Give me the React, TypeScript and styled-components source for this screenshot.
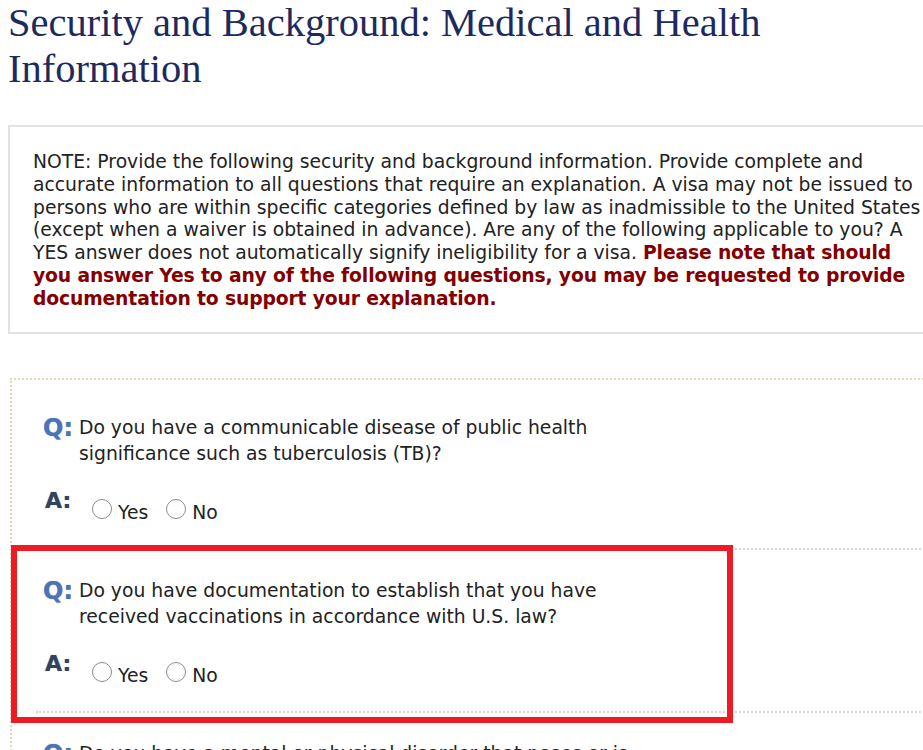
import styled, { createGlobalStyle } from 'styled-components';

const GlobalStyle = createGlobalStyle`
  html, body {
    margin: 0;
    padding: 0;
    background: #fff;
    overflow: hidden;
  }
  body {
    font-family: "DejaVu Sans", Verdana, sans-serif;
    color: #222;
  }
`;

const Page = styled.div`
  padding: 0 8px;
  width: 1000px;
`;

const Title = styled.h1`
  margin: 0;
  font-family: "Liberation Serif", "Times New Roman", serif;
  font-weight: normal;
  font-size: 40.5px;
  line-height: 46px;
  color: #1d2a5d;
  width: 900px;
`;

const NoteBox = styled.div`
  margin-top: 33px;
  width: 888px;
  padding: 24px 23px 22px 23px;
  border: 2px solid #e2e2e2;
  font-size: 18.75px;
  line-height: 22.75px;
  color: #222;
`;

const Warning = styled.strong`
  color: #840000;
  font-weight: bold;
  letter-spacing: -0.15px;
`;

const QuestionList = styled.div`
  margin-top: 44px;
  margin-left: 2px;
  padding: 7px 0 0 24px;
  border-top: 2px dotted #e5d8bd;
  border-left: 2px dotted #e5d8bd;
`;

const Item = styled.div`
  position: relative;
  padding: 28px 0 22px 7px;
  border-bottom: 2px dotted #d6d6d6;
`;

const Highlight = styled.div`
  position: absolute;
  top: -5px;
  left: -25px;
  width: 722px;
  height: 178px;
  box-sizing: border-box;
  border: 6px solid #ed1c24;
  pointer-events: none;
`;

const QRow = styled.div`
  display: flex;
  align-items: flex-start;
`;

const QLabel = styled.span`
  width: 36px;
  flex: none;
  font-size: 24px;
  line-height: 26px;
  font-weight: bold;
  color: #4d73b2;
  text-shadow: 0 0 1px rgba(70, 110, 175, 0.7);
`;

const QText = styled.div`
  width: 560px;
  font-size: 18.75px;
  line-height: 26px;
  color: #222;
`;

const ARow = styled.div`
  display: flex;
  align-items: flex-start;
  margin-top: 33px;
  height: 26px;
`;

const ALabel = styled.span`
  width: 47px;
  flex: none;
  margin-top: -12px;
  padding-left: 2px;
  font-size: 22px;
  line-height: 26px;
  font-weight: bold;
  color: #33425f;
  text-shadow: 0 0 1px rgba(50, 66, 95, 0.6);
`;

const Option = styled.label`
  display: inline-flex;
  align-items: flex-start;
  margin-right: 18px;
  font-size: 18.75px;
  line-height: 26px;
  color: #222;
`;

const Radio = styled.input.attrs({ type: 'radio' })`
  appearance: none;
  width: 20px;
  height: 20px;
  margin: -1px 6px 0 0;
  border: 1px solid #8d8d8d;
  border-radius: 50%;
  background: #fff;
  flex: none;
`;

type Question = { id: string; text: string; highlight?: boolean };

const questions: Question[] = [
  {
    id: 'q1',
    text: 'Do you have a communicable disease of public health significance such as tuberculosis (TB)?',
  },
  {
    id: 'q2',
    text: 'Do you have documentation to establish that you have received vaccinations in accordance with U.S. law?',
    highlight: true,
  },
  {
    id: 'q3',
    text: 'Do you have a mental or physical disorder that poses or is likely to pose a threat to the safety or welfare of yourself or others?',
  },
];

export default function App() {
  return (
    <Page>
      <GlobalStyle />
      <Title>Security and Background: Medical and Health Information</Title>

      <NoteBox>
        NOTE: Provide the following security and background information. Provide complete and
        accurate information to all questions that require an explanation. A visa may not be issued
        to persons who are within specific categories defined by law as inadmissible to the United
        States (except when a waiver is obtained in advance). Are any of the following applicable to
        you? A YES answer does not automatically signify ineligibility for a visa.{' '}
        <Warning>
          Please note that should you answer Yes to any of the following questions, you may be
          requested to provide documentation to support your explanation.
        </Warning>
      </NoteBox>

      <QuestionList>
        {questions.map((q) => (
          <Item key={q.id}>
            {q.highlight && <Highlight />}
            <QRow>
              <QLabel>Q:</QLabel>
              <QText>{q.text}</QText>
            </QRow>
            <ARow>
              <ALabel>A:</ALabel>
              <Option>
                <Radio name={q.id} />
                Yes
              </Option>
              <Option>
                <Radio name={q.id} />
                No
              </Option>
            </ARow>
          </Item>
        ))}
      </QuestionList>
    </Page>
  );
}
